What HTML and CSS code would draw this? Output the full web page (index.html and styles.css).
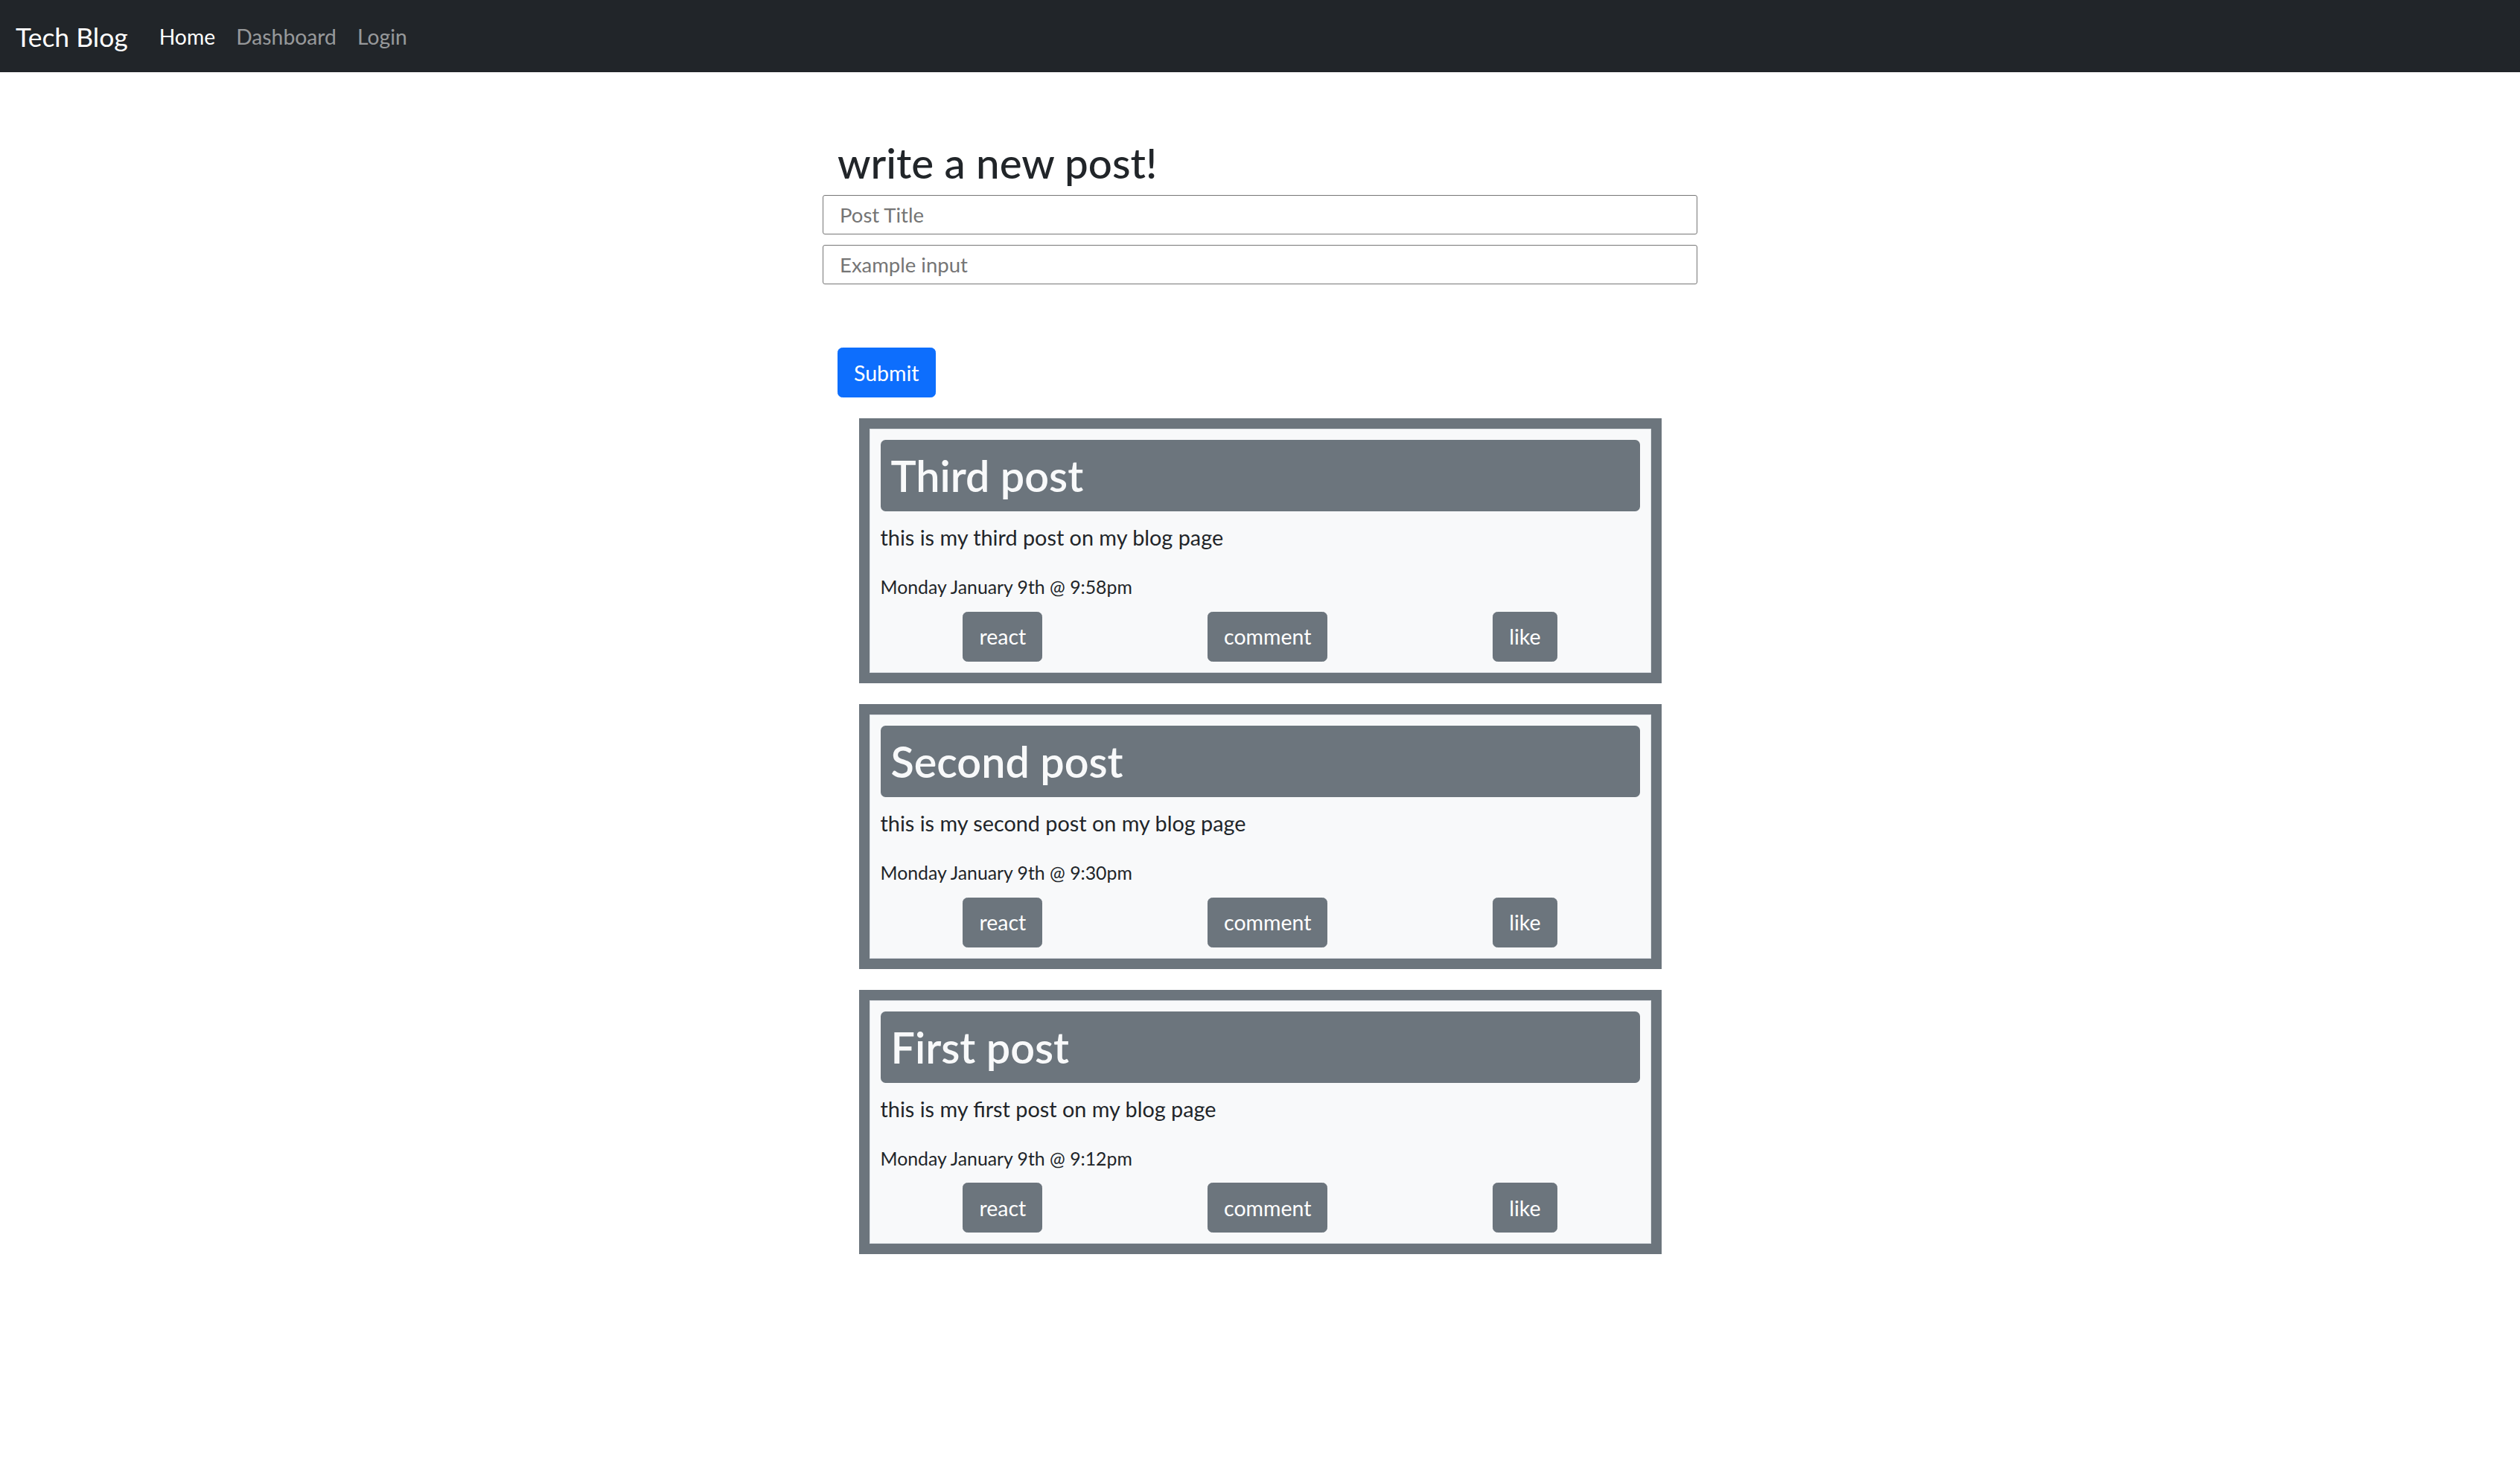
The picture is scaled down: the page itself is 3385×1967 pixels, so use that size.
FILE: index.html
```html
<!DOCTYPE html>
<html lang="en">
<head>
<meta charset="utf-8">
<title>Tech Blog</title>
<link rel="stylesheet" href="styles.css">
</head>
<body>
<nav class="navbar">
  <a class="brand" href="#">Tech Blog</a>
  <a class="nav-link active" href="#">Home</a>
  <a class="nav-link" href="#">Dashboard</a>
  <a class="nav-link" href="#">Login</a>
</nav>
<main class="page">
  <section class="composer">
    <h2 class="composer-title">write a new post!</h2>
    <input class="field" type="text" placeholder="Post Title">
    <input class="field" type="text" placeholder="Example input">
    <button class="btn-submit" type="button">Submit</button>
  </section>
  <section class="posts">
    <article class="post">
      <div class="post-inner">
        <h2 class="post-title">Third post</h2>
        <p class="post-body">this is my third post on my blog page</p>
        <p class="post-date">Monday January 9th @ 9:58pm</p>
        <div class="post-actions">
          <button class="btn-action" type="button">react</button>
          <button class="btn-action" type="button">comment</button>
          <button class="btn-action" type="button">like</button>
        </div>
      </div>
    </article>
    <article class="post">
      <div class="post-inner">
        <h2 class="post-title">Second post</h2>
        <p class="post-body">this is my second post on my blog page</p>
        <p class="post-date">Monday January 9th @ 9:30pm</p>
        <div class="post-actions">
          <button class="btn-action" type="button">react</button>
          <button class="btn-action" type="button">comment</button>
          <button class="btn-action" type="button">like</button>
        </div>
      </div>
    </article>
    <article class="post">
      <div class="post-inner">
        <h2 class="post-title">First post</h2>
        <p class="post-body">this is my first post on my blog page</p>
        <p class="post-date">Monday January 9th @ 9:12pm</p>
        <div class="post-actions">
          <button class="btn-action" type="button">react</button>
          <button class="btn-action" type="button">comment</button>
          <button class="btn-action" type="button">like</button>
        </div>
      </div>
    </article>
  </section>
</main>
</body>
</html>
```
FILE: styles.css
```css
* { box-sizing: border-box; }

html, body {
  margin: 0;
  padding: 0;
  background: #ffffff;
}

body {
  font-family: "Segoe UI", Lato, "Open Sans", sans-serif;
  color: #212529;
  font-size: 28px;
  line-height: 1.5;
}

.navbar {
  height: 97px;
  background: #212529;
  display: flex;
  align-items: center;
  padding: 0 21px;
}

.brand {
  color: #ffffff;
  text-decoration: none;
  font-size: 35.5px;
  line-height: 52px;
  margin-right: 28px;
  margin-top: 2px;
}

.nav-link {
  color: rgba(255, 255, 255, 0.55);
  text-decoration: none;
  font-size: 28.3px;
  line-height: 42px;
  padding: 0 14px;
}

.nav-link.active {
  color: #ffffff;
}

.page {
  padding-top: 84px;
  padding-bottom: 80px;
}

.composer {
  width: 1175px;
  margin: 0 auto;
}

.composer-title {
  font-size: 56.5px;
  font-weight: 500;
  line-height: 67px;
  padding-top: 4px;
  margin: 0 0 10px 20px;
  color: #212529;
}

.field {
  display: block;
  width: 100%;
  height: 53px;
  margin: 0 0 14px 0;
  padding: 0 22px;
  border: 1.75px solid #767676;
  border-radius: 3px;
  font-family: inherit;
  font-size: 27.5px;
  color: #212529;
  background: #ffffff;
}

.field::placeholder {
  color: #757575;
}

.btn-submit {
  display: block;
  margin: 85px 0 0 20px;
  height: 67px;
  padding: 0 21px;
  border: 1.75px solid #0d6efd;
  border-radius: 6.5px;
  background: #0d6efd;
  color: #ffffff;
  font-family: inherit;
  font-size: 28.5px;
  line-height: 42px;
}

.posts {
  width: 1078px;
  margin: 28px auto 0;
  display: flex;
  flex-direction: column;
  gap: 28px;
}

.post {
  border: 14px solid #6c757d;
  background: #f8f9fa;
}

.post-inner {
  border: 1px solid #dee2e6;
  padding: 14px;
}

.post-title {
  margin: 0 0 14px 0;
  background: #6c757d;
  color: #f8f9fa;
  border-radius: 6.5px;
  padding: 14px;
  font-size: 57.5px;
  font-weight: 600;
  line-height: 68px;
}

.post-body {
  margin: 0 0 28px 0;
  font-size: 28.8px;
  line-height: 42px;
  color: #212529;
}

.post-date {
  margin: 0 0 14px 0;
  font-size: 24.8px;
  line-height: 36.75px;
  color: #212529;
}

.post-actions {
  display: flex;
  justify-content: space-around;
}

.btn-action {
  height: 67px;
  padding: 0 21px;
  border: 1.75px solid #6c757d;
  border-radius: 6.5px;
  background: #6c757d;
  color: #ffffff;
  font-family: inherit;
  font-size: 28.5px;
  line-height: 42px;
}
```
